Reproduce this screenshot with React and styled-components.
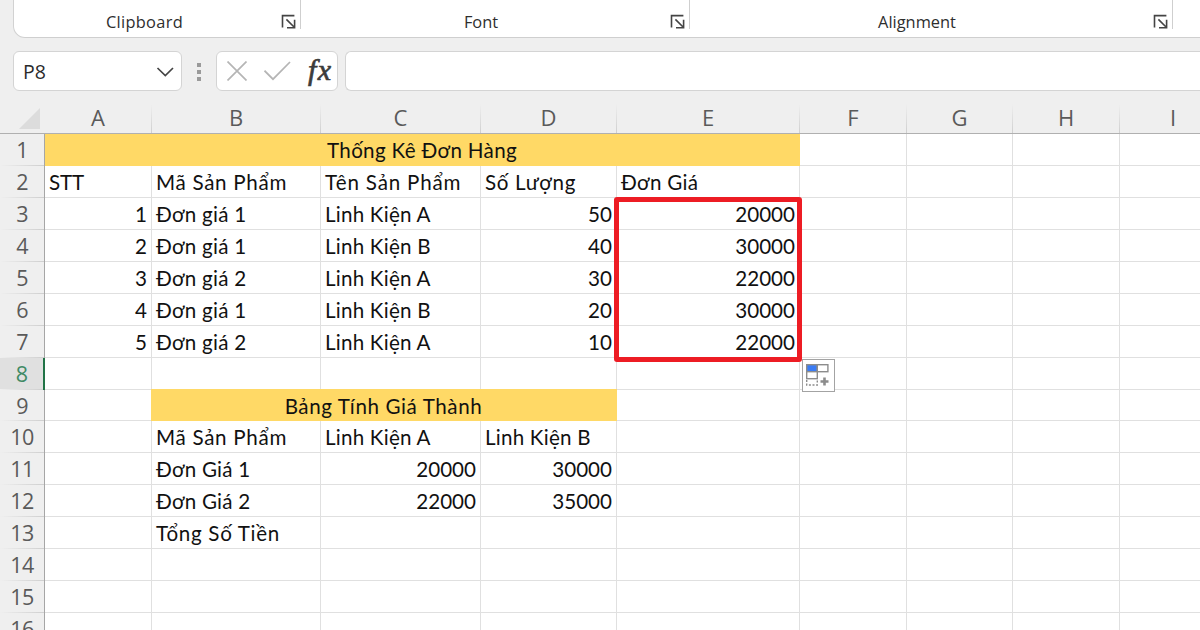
import React from "react";
import styled, { createGlobalStyle } from "styled-components";

const columns = ["A", "B", "C", "D", "E", "F", "G", "H", "I"];

const groups = [
  { name: "Clipboard", width: 286, shift: -11, track: 0.3 },
  { name: "Font", width: 389, shift: -14, track: 0 },
  { name: "Alignment", width: 483, shift: -14, track: 0 },
];

// each row holds the cells that have a value, the rest stay blank
// track = letter spacing in px
const rows = [
  { A: { v: "Thống Kê Đơn Hàng", span: 5, track: 0.32 } },
  {
    A: { v: "STT", track: -0.2 },
    B: { v: "Mã Sản Phẩm", track: 0.7 },
    C: { v: "Tên Sản Phẩm", track: 0.82 },
    D: { v: "Số Lượng", track: 0.65 },
    E: { v: "Đơn Giá", track: 0.3 },
  },
  { A: { v: 1 }, B: { v: "Đơn giá 1", track: 0.25 }, C: { v: "Linh Kiện A", track: 0.22 }, D: { v: 50 }, E: { v: 20000 } },
  { A: { v: 2 }, B: { v: "Đơn giá 1", track: 0.25 }, C: { v: "Linh Kiện B", track: 0.22 }, D: { v: 40 }, E: { v: 30000 } },
  { A: { v: 3 }, B: { v: "Đơn giá 2", track: 0.25 }, C: { v: "Linh Kiện A", track: 0.22 }, D: { v: 30 }, E: { v: 22000 } },
  { A: { v: 4 }, B: { v: "Đơn giá 1", track: 0.25 }, C: { v: "Linh Kiện B", track: 0.22 }, D: { v: 20 }, E: { v: 30000 } },
  { A: { v: 5 }, B: { v: "Đơn giá 2", track: 0.25 }, C: { v: "Linh Kiện A", track: 0.22 }, D: { v: 10 }, E: { v: 22000 } },
  {},
  { B: { v: "Bảng Tính Giá Thành", span: 3, track: 0.6 } },
  { B: { v: "Mã Sản Phẩm", track: 0.7 }, C: { v: "Linh Kiện A", track: 0.22 }, D: { v: "Linh Kiện B", track: 0.22 } },
  { B: { v: "Đơn Giá 1", track: 0.22 }, C: { v: 20000 }, D: { v: 30000 } },
  { B: { v: "Đơn Giá 2", track: 0.22 }, C: { v: 22000 }, D: { v: 35000 } },
  { B: { v: "Tổng Số Tiền", track: 0.68 } },
  {},
  {},
  {},
];

const activeRow = 8;

function Launcher() {
  return (
    <svg width="15" height="15" viewBox="0 0 15 15" fill="none" stroke="#444" strokeWidth="1.6">
      <path d="M1.5 13.4V1.6H13.4" />
      <path d="M5.4 5.4L12.8 12.8M13.6 5.8V13.8H6" />
    </svg>
  );
}

function Row({ data, number }) {
  const cells = [];
  for (let i = 0; i < columns.length; i++) {
    const cell = data[columns[i]] || {};
    if (cell.span) {
      cells.push(
        <MergedCell key={i} $span={cell.span} $track={cell.track} $first={i === 0}>{cell.v}</MergedCell>
      );
      i += cell.span - 1;
    } else {
      cells.push(
        <Cell key={i} $track={cell.track} $number={typeof cell.v === "number"}>{cell.v}</Cell>
      );
    }
  }
  return (
    <>
      <RowHeader $active={number === activeRow}>{number}</RowHeader>
      {cells}
    </>
  );
}

export default function App() {
  return (
    <Page>
      <GlobalStyle />
      <Ribbon>
        {groups.map(group => (
          <Group key={group.name} $width={group.width}>
            <GroupName $shift={group.shift} $track={group.track}>{group.name}</GroupName>
            <Launcher />
          </Group>
        ))}
      </Ribbon>

      <FormulaBar>
        <NameBox>
          P8
          <svg width="18" height="11" viewBox="0 0 18 11" fill="none" stroke="#444" strokeWidth="1.7">
            <path d="M1.5 2L9.3 9.5L17 2" />
          </svg>
        </NameBox>
        <Dots><i /><i /><i /></Dots>
        <Buttons>
          <svg width="20" height="20" viewBox="0 0 20 20" fill="none" stroke="#b5b5b5" strokeWidth="1.7">
            <path d="M0.5 0.5L19.5 19.5M19.5 0.5L0.5 19.5" />
          </svg>
          <svg width="27" height="20" viewBox="0 0 27 20" fill="none" stroke="#b5b5b5" strokeWidth="1.7">
            <path d="M0.5 9.7L9 18.2L26 1" />
          </svg>
          <Fx>fx</Fx>
        </Buttons>
        <FormulaInput />
      </FormulaBar>

      <Sheet>
        <Grid>
          <Corner>
            <svg width="21" height="21" viewBox="0 0 21 21">
              <path d="M21 0V21H0Z" fill="#dcdcdc" />
            </svg>
          </Corner>
          {columns.map(name => <ColumnHeader key={name}>{name}</ColumnHeader>)}
          {rows.map((row, i) => <Row key={i} data={row} number={i + 1} />)}
        </Grid>
        <Highlight />
        <FillOptions>
          <svg width="33" height="33" viewBox="0 0 33 33" fill="none" stroke="#8c8c8c" strokeWidth="1.4">
            <rect x="4.7" y="5.7" width="10.6" height="7" fill="#3b7cf5" />
            <rect x="15.3" y="5.7" width="10.6" height="7" fill="#fff" />
            <rect x="4.7" y="12.7" width="10.6" height="7" fill="#fff" />
            <path d="M4.7 21V26H15.3V20.5" strokeDasharray="2 1.6" />
            <path d="M22.5 18.5V26.5M18.5 22.5H26.5" strokeWidth="2.6" />
          </svg>
        </FillOptions>
      </Sheet>
    </Page>
  );
}

const GlobalStyle = createGlobalStyle`
  * {
    box-sizing: border-box;
  }

  body {
    margin: 0;
    overflow: hidden;
  }
`;

const Page = styled.div`
  width: 1200px;
  height: 630px;
  overflow: hidden;
  background: #efefef;
  font-family: "Open Sans", "Noto Sans", sans-serif;
  display: flex;
  flex-direction: column;

  svg {
    display: block;
    flex: none;
  }
`;

const Ribbon = styled.div`
  flex: none;
  display: flex;
  height: 38px;
  margin-left: 13px;
  background: #fff;
  border-left: 1px solid #d2d2d2;
  border-bottom: 1px solid #cfcfcf;
  border-bottom-left-radius: 12px;
`;

const Group = styled.div`
  flex: none;
  display: flex;
  align-items: flex-end;
  width: ${props => props.$width}px;
  height: 29px;
  padding-right: 4px;
  border-right: 1px solid #cfcfcf;

  &:first-child {
    width: 287px;
  }
`;

const GroupName = styled.div`
  flex: 1;
  padding-left: ${props => 15 + props.$shift}px;
  padding-right: 10px;
  font-size: 16.4px;
  line-height: 15px;
  letter-spacing: ${props => props.$track}px;
  text-align: center;
  color: #2e2e2e;
`;

const FormulaBar = styled.div`
  flex: none;
  display: flex;
  height: 40px;
  margin-top: 13px;
  padding-left: 13px;
`;

const Box = styled.div`
  display: flex;
  align-items: center;
  background: #fff;
  border: 1px solid #d4d4d4;
  border-radius: 6px;
`;

const NameBox = styled(Box)`
  justify-content: space-between;
  width: 169px;
  padding: 1px 7px 0 9px;
  font-size: 19.5px;
  color: #2a2a2a;
`;

const Dots = styled.div`
  display: flex;
  flex-direction: column;
  justify-content: center;
  gap: 3px;
  width: 34px;
  padding: 2px 0 0 15px;

  i {
    width: 4px;
    height: 4px;
    background: #9a9a9a;
  }
`;

const Buttons = styled(Box)`
  width: 122px;
  padding-left: 10px;
  gap: 17px;
`;

const Fx = styled.span`
  margin-top: -3px;
  font: italic 30px/34px "Liberation Serif", serif;
  letter-spacing: 1.5px;
  color: #3c3c3c;
  -webkit-text-stroke: 0.7px #3c3c3c;
`;

const FormulaInput = styled(Box)`
  flex: 1;
  margin-left: 7px;
  border-right: 0;
  border-radius: 6px 0 0 6px;
`;

const Sheet = styled.div`
  flex: none;
  position: relative;
  margin-top: 13px;
`;

const Grid = styled.div`
  display: grid;
  grid-template-columns: 45px 107px 169px 160px 136px 183px 107px 106px 107px 107px;
  grid-template-rows: 30px;
  grid-auto-rows: 31.94px;
`;

const Corner = styled.div`
  display: flex;
  justify-content: flex-end;
  padding: 4px 5px 0 0;
  border-bottom: 1px solid #b0b0b0;
`;

const ColumnHeader = styled.div`
  padding-right: 1px;
  font-size: 22px;
  line-height: 27px;
  text-align: center;
  color: #5a5a5a;
  background: linear-gradient(#efefef, #cfcfcf) right / 1px 100% no-repeat;
  border-bottom: 1px solid #b0b0b0;
`;

const RowHeader = styled.div`
  font-size: 21.5px;
  line-height: 32px;
  letter-spacing: -0.6px;
  text-align: center;
  color: ${props => (props.$active ? "#3f8a65" : "#5a5a5a")};
  background: linear-gradient(to right, #efefef, #cfcfcf) bottom / 100% 1px no-repeat
    ${props => (props.$active ? "#e0e0e0" : "#efefef")};
  border-right: ${props => (props.$active ? "2px solid #217346" : "1px solid #a6a6a6")};
`;

const Cell = styled.div`
  padding: 0 4px;
  font-family: Lato, "Open Sans", sans-serif;
  font-size: 20.6px;
  line-height: 33px;
  letter-spacing: ${props => props.$track || 0}px;
  white-space: nowrap;
  text-align: ${props => (props.$number ? "right" : "left")};
  color: #111;
  background: #fff;
  border-right: 1px solid #e0e0e0;
  border-bottom: 1px solid #e0e0e0;
`;

const MergedCell = styled(Cell)`
  grid-column: span ${props => props.$span};
  margin-left: ${props => (props.$first ? 0 : -1)}px;
  margin-top: ${props => (props.$first ? 0 : -1)}px;
  line-height: ${props => (props.$first ? 33 : 35)}px;
  text-align: center;
  background: #ffd966;
  border-color: #ffd966;
`;

// red frame around the computed prices, E3:E7
const Highlight = styled.div`
  position: absolute;
  left: 614px;
  top: 93px;
  width: 188px;
  height: 165px;
  border: 5px solid #ed1c24;
  border-radius: 3px;
`;

const FillOptions = styled.div`
  position: absolute;
  left: 802px;
  top: 255px;
  width: 33px;
  height: 33px;
  background: #fff;
  box-shadow: inset 0 0 0 1px #a3a3a3;
`;
